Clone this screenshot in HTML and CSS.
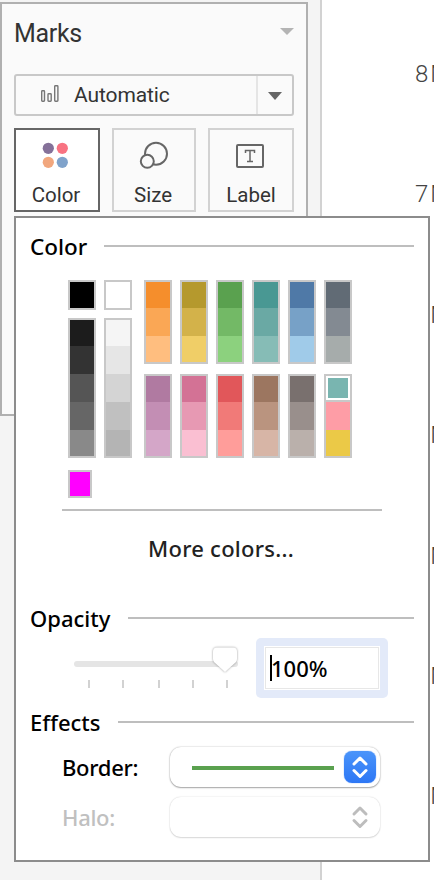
FILE: index.html
```
<!DOCTYPE html>
<html lang="en">
<head>
<meta charset="utf-8">
<title>Marks</title>
<link rel="stylesheet" href="styles.css">
</head>
<body>
<div class="app">
  <aside class="sidebar">
    <section class="card">
      <header class="card-head"><h1>Marks</h1><svg width="14" height="7" viewBox="0 0 14 7"><path d="M0 0H14L7 7Z" fill="#b4b4b4"/></svg></header>
      <div class="type-select">
        <svg class="bars" width="20" height="20" viewBox="0 0 20 20" fill="none" stroke="#777" stroke-width="1.4"><rect x="1.7" y="6.7" width="2.8" height="10.6" rx=".7"/><rect x="8" y="9.7" width="3.2" height="7.6" rx=".7"/><rect x="14.7" y="1.700" width="3.2" height="15.6" rx=".7"/></svg>
        <span class="type-name">Automatic</span>
        <span class="type-arrow"><svg width="14" height="8" viewBox="0 0 14 8"><path d="M0 0H14L7 8Z" fill="#666"/></svg></span>
      </div>
      <div class="shelf">
        <button class="mark active">
          <svg width="40" height="37" viewBox="0 0 40 37"><circle cx="11.3" cy="18.3" r="5.6" fill="#857199"/><circle cx="25.3" cy="18.3" r="5.6" fill="#f87382"/><circle cx="11.3" cy="32.3" r="5.6" fill="#f1a77e"/><circle cx="25.3" cy="32.3" r="5.6" fill="#80a3cb"/></svg>
          <span>Color</span>
        </button>
        <button class="mark">
          <svg width="40" height="37" viewBox="0 0 40 37" fill="#fafafa" stroke="#666" stroke-width="2"><circle cx="22" cy="23.700" r="11"/><circle cx="13.3" cy="31.3" r="6.5"/></svg>
          <span>Size</span>
        </button>
        <button class="mark">
          <svg width="40" height="37" viewBox="0 0 40 37" fill="none" stroke="#666"><rect x="6" y="15" width="26" height="22" rx="1" stroke-width="2"/><path d="M14.500 23V20.500H23.500V23M19 20.500V31.500M16 31.500H22" stroke-width="1.5"/></svg>
          <span class="t-label">Label</span>
        </button>
      </div>
    </section>
  </aside>
  <main class="axis">
    <span>8M</span><span>7M</span><span>6M</span><span>5M</span><span>4M</span><span>3M</span><span>2M</span>
  </main>

  <div class="dialog">
    <div class="head head-color"><h2>Color</h2><hr></div>
    <div class="palette">
      <div class="mono">
        <div class="ramp single"><i class="k0"></i></div>
        <div class="ramp"><i class="k1"></i><i class="k2"></i><i class="k3"></i><i class="k4"></i><i class="k5"></i></div>
      </div>
      <div class="mono">
        <div class="ramp single"><i class="w0"></i></div>
        <div class="ramp"><i class="w1"></i><i class="w2"></i><i class="w3"></i><i class="w4"></i><i class="w5"></i></div>
      </div>
      <div class="hues">
        <div class="ramp"><i class="or1"></i><i class="or2"></i><i class="or3"></i></div>
        <div class="ramp"><i class="ye1"></i><i class="ye2"></i><i class="ye3"></i></div>
        <div class="ramp"><i class="gr1"></i><i class="gr2"></i><i class="gr3"></i></div>
        <div class="ramp"><i class="te1"></i><i class="te2"></i><i class="te3"></i></div>
        <div class="ramp"><i class="bl1"></i><i class="bl2"></i><i class="bl3"></i></div>
        <div class="ramp"><i class="sl1"></i><i class="sl2"></i><i class="sl3"></i></div>
        <div class="ramp"><i class="pu1"></i><i class="pu2"></i><i class="pu3"></i></div>
        <div class="ramp"><i class="pi1"></i><i class="pi2"></i><i class="pi3"></i></div>
        <div class="ramp"><i class="re1"></i><i class="re2"></i><i class="re3"></i></div>
        <div class="ramp"><i class="br1"></i><i class="br2"></i><i class="br3"></i></div>
        <div class="ramp"><i class="ta1"></i><i class="ta2"></i><i class="ta3"></i></div>
        <div class="ramp"><i class="cu1 selected"></i><i class="cu2"></i><i class="cu3"></i></div>
      </div>
    </div>
    <div class="custom"></div>
    <hr class="rule">
    <div class="more"><span>More colors...</span></div>
    <div class="head head-opacity"><h2>Opacity</h2><hr></div>
    <div class="opacity">
      <svg class="slider" width="172" height="50" viewBox="0 0 172 50">
        <rect x="4" y="19" width="164" height="6" rx="3" fill="#e5e5e5"/>
        <path d="M19 38v8M53 38v8M89 38v8M123 38v8M157 38v8" stroke="#d2d2d2" stroke-width="2"/>
        <path class="knob" d="M147 5.500H163Q167 5.500 167 9.500V17Q167 19 165.500 20.500L155 30L144.500 20.500Q143 19 143 17V9.500Q143 5.500 147 5.500Z" fill="#fff"/>
      </svg>
      <div class="focus"><div class="input"><span class="caret"></span><span class="value">100%</span></div></div>
    </div>
    <div class="head head-effects"><h2>Effects</h2><hr></div>
    <div class="effect">
      <label>Border:</label>
      <div class="select"><span class="line"></span><span class="stepper"><svg width="32" height="32" viewBox="0 0 32 32"><path d="M10 13L16 7L22 13M10 19.500L16 25.500L22 19.500"/></svg></span></div>
    </div>
    <div class="effect disabled">
      <label>Halo:</label>
      <div class="select"><span class="stepper"><svg width="32" height="32" viewBox="0 0 32 32"><path d="M10 13L16 7L22 13M10 19.500L16 25.500L22 19.500"/></svg></span></div>
    </div>
  </div>
</div>
</body>
</html>
```
FILE: styles.css
```
* { box-sizing: border-box; }
body { margin: 0; background: #fff; }
h1, h2 { margin: 0; font-weight: inherit; }
svg { display: block; }
span { white-space: nowrap; }

.app { position: relative; display: flex; width: 434px; height: 880px; overflow: hidden; font-family: Roboto, sans-serif; color: #333; }
.sidebar { flex: none; width: 322px; padding-top: 2px; background: #f4f4f4; border-right: 2px solid #d2d2d2; }
.card { width: 308px; height: 414px; padding: 0 12px; background: #fafafa; border: 2px solid #b0b0b0; }
.card-head { display: flex; height: 70px; align-items: center; justify-content: space-between; padding-bottom: 11px; }
.card-head h1 { font-size: 25px; font-weight: 400; line-height: 30px; letter-spacing: -.3px; }
.card-head svg { margin-top: -4px; }
.type-select { display: flex; align-items: center; width: 280px; height: 42px; border: 2px solid #c8c8c8; border-radius: 3px; font-size: 21px; }
.bars { margin: -2px 0 0 24px; }
.type-name { margin-left: 14px; letter-spacing: -.1px; }
.type-arrow { display: flex; align-items: center; justify-content: center; width: 36px; height: 38px; margin-left: auto; border-left: 2px solid #e5e5e5; }
.type-arrow svg { margin-top: 2px; }
.shelf { display: grid; grid-template-columns: 86px 84px 86px; gap: 12px; margin-top: 12px; }
.mark { display: flex; flex-direction: column; align-items: center; height: 84px; padding: 0; background: #fafafa; border: 2px solid #d2d2d2; font: 20.500px/28px Roboto, sans-serif; color: #333; }
.mark svg { flex: none; overflow: visible; }
.mark span { margin: 14px 2px 0 0; }
.mark .t-label { margin-right: 0; }
.mark.active { background: #fff; border-color: #666; }
.axis { flex: 1; display: flex; flex-direction: column; padding: 14px 0 0 93px; font-size: 24px; font-weight: 300; letter-spacing: 2px; color: #444; }
.axis span { flex: none; height: 120.400px; line-height: 120.400px; }

.dialog { position: absolute; left: 14px; top: 216px; width: 416px; height: 646px; background: #fff; border: 2px solid #8c8c8c; font: 500 22px/30px "Noto Sans", sans-serif; color: #000; }
.head { display: flex; align-items: center; height: 30px; padding: 0 14px; }
.head h2 { flex: none; width: 74px; font-size: 22px; white-space: nowrap; }
.head hr { flex: 1; }
hr { margin: 0; height: 2px; border: 0; background: #bebebe; }
.head-color { height: 56px; }
.head-color h2 { padding-top: 1px; font-size: 22.500px; }
.head-opacity { margin-top: 14px; }
.head-opacity h2 { width: 98px; }
.head-effects { margin-top: 9px; }
.head-effects h2 { width: 88px; }
.palette { display: flex; margin: 6px 0 0 52px; }
.mono { width: 28px; margin-right: 8px; }
.hues { display: grid; grid-template-columns: repeat(6, 28px); gap: 10px 8px; margin-left: 4px; }
.ramp { width: 28px; border: 2px solid #c8c8c8; }
.ramp i { display: block; height: 28px; }
.ramp i:first-child, .ramp i:last-child { height: 26px; }
.single { margin-bottom: 8px; }
.custom { width: 24px; height: 28px; margin: 12px 0 0 52px; background: #f0f; border: 2px solid #c8c8c8; }
.rule { width: 320px; margin: 11px 0 0 46px; }
.more { height: 78px; padding-left: 132px; line-height: 74px; letter-spacing: .25px; color: #222; }
.k0 { background: #000; } .k1 { background: #1c1c1c; } .k2 { background: #333; } .k3 { background: #555; } .k4 { background: #666; } .k5 { background: #898989; }
.w0 { background: #fff; } .w1 { background: #f5f5f5; } .w2 { background: #e6e6e6; } .w3 { background: #d4d4d4; } .w4 { background: #c0c0c0; } .w5 { background: #b4b4b4; }
.or1 { background: #f58e2c; } .or2 { background: #faa755; } .or3 { background: #ffbe7f; }
.ye1 { background: #b5992d; } .ye2 { background: #d3b24a; } .ye3 { background: #f0ce67; }
.gr1 { background: #5aa14f; } .gr2 { background: #73b966; } .gr3 { background: #8cd17e; }
.te1 { background: #499893; } .te2 { background: #6aa9a4; } .te3 { background: #86bcb6; }
.bl1 { background: #4f79a7; } .bl2 { background: #77a1c7; } .bl3 { background: #a0cbe9; }
.sl1 { background: #616b75; } .sl2 { background: #838a92; } .sl3 { background: #a6acab; }
.pu1 { background: #b07aa1; } .pu2 { background: #c38eb4; } .pu3 { background: #d4a6c8; }
.pi1 { background: #d37295; } .pi2 { background: #e799b3; } .pi3 { background: #fabfd2; }
.re1 { background: #e1575a; } .re2 { background: #f17a78; } .re3 { background: #ff9d9a; }
.br1 { background: #9c7660; } .br2 { background: #ba947f; } .br3 { background: #d7b5a6; }
.ta1 { background: #79706e; } .ta2 { background: #998f8c; } .ta3 { background: #bab0ab; }
.cu1 { background: #79b5b0; } .cu2 { background: #fe9da6; } .cu3 { background: #ebc947; }
.ramp .selected:first-child { height: 24px; margin-bottom: 2px; border: 2px solid #fff; box-shadow: 0 2px #c8c8c8; }

.opacity { display: flex; height: 60px; margin-top: 5px; padding-left: 54px; }
.slider { margin: 4px 14px 0 0; overflow: visible; }
.knob { filter: drop-shadow(0 .5px 1px rgb(0 0 0 / .4)); }
.focus { width: 132px; height: 60px; padding: 8px; background: #e3eaf9; border-radius: 5px; }
.input { display: flex; align-items: center; width: 116px; height: 44px; background: linear-gradient(#b9b9b9, #b9b9b9) 1px 41px / 112px 1px no-repeat #fff; border: 1px solid #fff; outline: 1px solid #e7e7e7; outline-offset: -2px; }
.caret { width: 2px; height: 26px; margin-left: 5px; background: #000; }
.value { margin-left: -1px; }
.effect { display: flex; align-items: center; height: 40px; margin-top: 10px; padding-left: 46px; }
.effect label { width: 108px; letter-spacing: -.3px; }
.select { display: flex; align-items: center; justify-content: flex-end; width: 210px; height: 40px; padding-right: 4px; border-radius: 11px; background: #fff; box-shadow: 0 0 1.500px rgb(0 0 0 / .35), 0 1px 1.500px rgb(0 0 0 / .3); }
.line { width: 142px; height: 4px; margin: 1px 10px 0 0; background: #5aa14f; }
.stepper { border-radius: 8px; background: linear-gradient(#4a94fa, #2d77f5); box-shadow: 0 0 1px #2d77f5; }
.stepper path { fill: none; stroke: #fff; stroke-width: 3px; stroke-linecap: round; stroke-linejoin: round; }
.disabled { color: #c0c0c0; }
.disabled .select { box-shadow: 0 0 1.500px rgb(0 0 0 / .2), 0 1px 1.500px rgb(0 0 0 / .12); }
.disabled .stepper { background: none; box-shadow: none; }
.disabled .stepper path { stroke: #bdbdbd; }
```
